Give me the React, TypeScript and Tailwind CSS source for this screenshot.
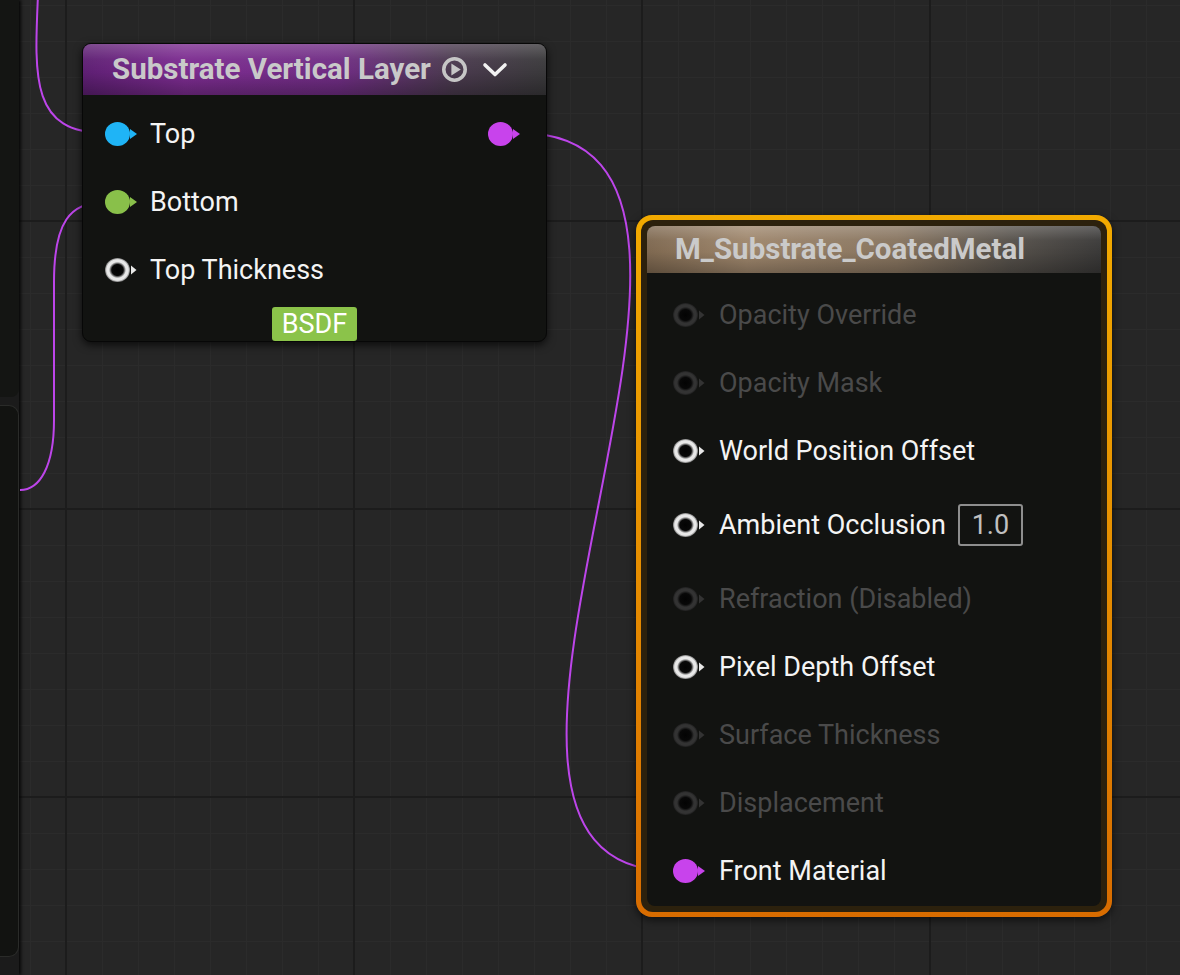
import React from "react";

type PinKind = "fill" | "ring" | "dim";

function Pin({ kind, color = "#ffffff" }: { kind: PinKind; color?: string }) {
  if (kind === "fill") {
    return (
      <svg width="33" height="26" viewBox="0 0 33 26" className="shrink-0">
        <ellipse cx="12.5" cy="13" rx="12.5" ry="12" fill={color} />
        <polygon points="25,8 32,13 25,18" fill={color} />
      </svg>
    );
  }
  const stroke = kind === "ring" ? "#e8e8e8" : "#333333";
  return (
    <svg width="33" height="26" viewBox="0 0 33 26" className="shrink-0">
      <defs>
        <radialGradient id={`pg-${kind}`} cx="50%" cy="50%" r="50%">
          <stop offset="0%" stopColor="#030303" />
          <stop offset="46%" stopColor="#080808" />
          <stop offset="68%" stopColor={stroke} />
          <stop offset="86%" stopColor={stroke} />
          <stop offset="100%" stopColor={kind === "ring" ? "#777777" : "#1e1e1e"} />
        </radialGradient>
      </defs>
      <ellipse cx="12.5" cy="13" rx="12.5" ry="12" fill={`url(#pg-${kind})`} />
      <polygon points="26,8.5 31.5,13 26,17.5" fill={stroke} />
    </svg>
  );
}

function PlayIcon() {
  return (
    <svg width="25" height="25" viewBox="0 0 24 24">
      <circle cx="12" cy="12" r="10.3" fill="none" stroke="#c6c6c6" strokeWidth="3.4" />
      <polygon points="9,6.2 18,12 9,17.8" fill="#c6c6c6" />
    </svg>
  );
}

function Chevron() {
  return (
    <svg width="26" height="16" viewBox="0 0 26 16">
      <polyline points="3,3 13,12.5 23,3" fill="none" stroke="#f2f2f2" strokeWidth="3.6" strokeLinecap="round" strokeLinejoin="round" />
    </svg>
  );
}

const materialInputs = [
  { label: "Opacity Override", dim: true },
  { label: "Opacity Mask", dim: true },
  { label: "World Position Offset" },
  { label: "Ambient Occlusion", value: "1.0" },
  { label: "Refraction (Disabled)", dim: true },
  { label: "Pixel Depth Offset" },
  { label: "Surface Thickness", dim: true },
  { label: "Displacement", dim: true },
  { label: "Front Material", color: "#c843ec" },
];

function LayerNode() {
  return (
    <div className="absolute left-[82px] top-[43px] w-[465px] h-[299px] rounded-[9px] bg-[#121311] border border-[#070707] shadow-[0_3px_8px_rgba(0,0,0,0.7)] flex flex-col">
      <div className="relative h-[51px] rounded-t-[8px] overflow-hidden bg-[linear-gradient(90deg,#5e1f73_0%,#7c2c90_22%,#702d84_55%,#4a3a4e_80%,#3a393b_100%)] flex items-center pl-[29px] pr-[38px]">
        <div className="absolute inset-0 bg-[linear-gradient(180deg,rgba(255,255,255,0.2)_0%,rgba(255,255,255,0.04)_30%,rgba(0,0,0,0)_55%,rgba(0,0,0,0.28)_100%)]" />
        <span className="relative text-[29.5px] font-bold text-[#c9c9c9] leading-none">Substrate Vertical Layer</span>
        <span className="relative ml-[11px] flex"><PlayIcon /></span>
        <span className="relative ml-auto flex"><Chevron /></span>
      </div>
      <div className="flex flex-col pt-[5px] pl-[22px] pr-[25px]">
        <div className="h-[68px] flex items-center justify-between">
          <div className="flex items-center gap-[12px]">
            <Pin kind="fill" color="#1fb4f6" />
            <span className="text-[27px] text-[#f4f4f4]">Top</span>
          </div>
          <Pin kind="fill" color="#c843ec" />
        </div>
        <div className="h-[68px] flex items-center gap-[12px]">
          <Pin kind="fill" color="#89c04a" />
          <span className="text-[27px] text-[#f4f4f4]">Bottom</span>
        </div>
        <div className="h-[68px] flex items-center gap-[12px]">
          <Pin kind="ring" />
          <span className="text-[27px] text-[#f4f4f4]">Top Thickness</span>
        </div>
      </div>
      <div className="mt-auto flex justify-center">
        <span className="h-[34px] px-[10px] rounded-[3px] bg-[#8bc34a] text-white text-[27px] leading-[34px]">BSDF</span>
      </div>
    </div>
  );
}

function MaterialNode() {
  return (
    <div className="absolute left-[636px] top-[215px] w-[476px] h-[702px] rounded-[16px] p-[5px] bg-[linear-gradient(180deg,#f2aa00_0%,#e68e00_50%,#d86c00_100%)] shadow-[0_3px_8px_rgba(0,0,0,0.6)]">
      <div className="h-full rounded-[12px] p-[6px] bg-[#2c210d]">
        <div className="h-full rounded-[8px] overflow-hidden bg-[#121311] flex flex-col">
          <div className="relative h-[47px] shrink-0 bg-[linear-gradient(90deg,#7e6850_0%,#9e866c_22%,#87745f_55%,#55504a_80%,#3a3938_100%)] flex items-center pl-[28px]">
            <div className="absolute inset-0 bg-[linear-gradient(180deg,rgba(255,255,255,0.22)_0%,rgba(255,255,255,0.04)_30%,rgba(0,0,0,0)_55%,rgba(0,0,0,0.25)_100%)]" />
            <span className="relative text-[29.5px] font-bold text-[#cacaca] leading-none">M_Substrate_CoatedMetal</span>
          </div>
          <div className="flex flex-col pt-[8px] pl-[26px]">
            {materialInputs.map((r) => (
              <div key={r.label} className={`${r.value ? "h-[80px]" : "h-[68px]"} flex items-center gap-[13px]`}>
                {r.color ? <Pin kind="fill" color={r.color} /> : <Pin kind={r.dim ? "dim" : "ring"} />}
                <span className={`text-[27px] ${r.dim ? "text-[#4a4a4a]" : "text-[#f4f4f4]"}`}>{r.label}</span>
                {r.value && (
                  <span className="ml-[-1px] h-[42px] w-[65px] rounded-[3px] border-2 border-[#8e8e8e] text-[27px] text-[#c0c0c0] flex items-center justify-center">
                    {r.value}
                  </span>
                )}
              </div>
            ))}
          </div>
        </div>
      </div>
    </div>
  );
}

export default function App() {
  return (
    <div className="relative w-[1180px] h-[975px] overflow-hidden bg-[#262626] font-['Roboto','Liberation_Sans',sans-serif]">
      <div className="absolute inset-0 bg-[image:linear-gradient(to_right,#2b2b2b_1px,transparent_1px),linear-gradient(to_bottom,#2b2b2b_1px,transparent_1px)] bg-[size:36px_36px] bg-[position:66px_5px]" />
      <div className="absolute inset-0 bg-[image:linear-gradient(to_right,#1c1c1c_2px,transparent_2px),linear-gradient(to_bottom,#1c1c1c_2px,transparent_2px)] bg-[size:288px_288px] bg-[position:65px_220px]" />

      {/* off-screen node on the left edge */}
      <div className="absolute left-0 top-0 w-[19px] h-full bg-[#1b1b1b] shadow-[2px_0_3px_rgba(0,0,0,0.8)]">
        <div className="h-[397px] bg-[#141513] rounded-br-[8px]" />
        <div className="mt-[8px] h-[552px] bg-[#121311] rounded-r-[10px] border-t border-r border-b border-[#2a2b29]" />
      </div>

      <svg className="absolute inset-0" width="1180" height="975">
        <path d="M38 -5 C34 80, 32 133, 105 133" fill="none" stroke="#bd45ea" strokeWidth="2" />
        <path d="M105 202 C70 202, 54 222, 54 282 L54 420 C54 466, 40 490, 20 490" fill="none" stroke="#bd45ea" strokeWidth="2" />
        <path d="M520 133 C820 133, 380 871, 672 871" fill="none" stroke="#bd45ea" strokeWidth="2" />
      </svg>

      <LayerNode />
      <MaterialNode />
    </div>
  );
}
